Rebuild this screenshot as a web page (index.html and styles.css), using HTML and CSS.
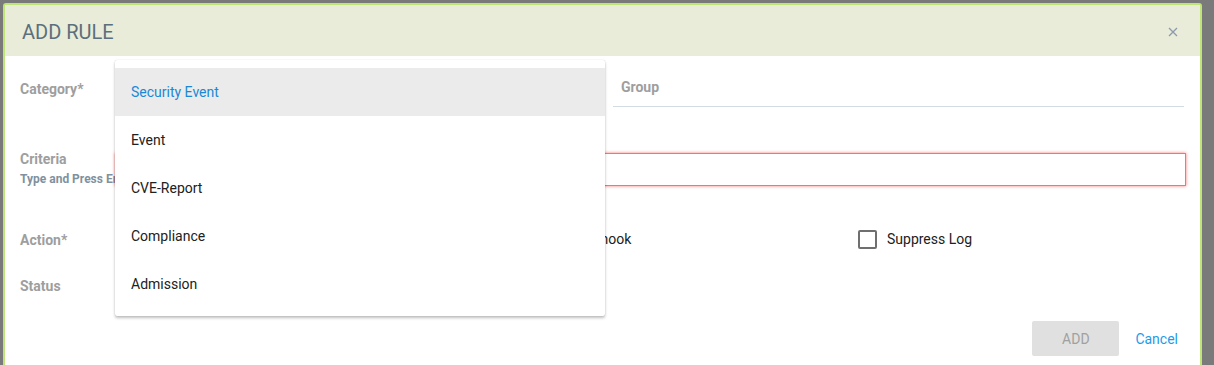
FILE: index.html
```html
<!DOCTYPE html>
<html lang="en">
<head>
    <meta charset="UTF-8">
    <meta name="viewport" content="width=device-width, initial-scale=1.0">
    <title>Add Rule</title>
    <link rel="stylesheet" href="styles.css">
</head>
<body>
    <div class="modal">
        <div class="modal-header">
            <h2>ADD RULE</h2>
            <span class="close">
                <svg width="10" height="10" viewBox="0 0 10 10">
                    <path d="M1 1 L9 9 M9 1 L1 9" stroke="#8c9bab" stroke-width="1.3" fill="none"/>
                </svg>
            </span>
        </div>

        <div class="modal-body">
            <div class="row row-top">
                <label class="label">Category*</label>
                <div class="select"></div>
                <div class="group-field">
                    <span class="group-label">Group</span>
                </div>
            </div>

            <div class="row row-criteria">
                <div class="label-block">
                    <label class="label">Criteria</label>
                    <div class="hint">Type and Press Enter</div>
                </div>
                <div class="criteria-input"></div>
            </div>

            <div class="row row-action">
                <label class="label">Action*</label>
                <div class="options">
                    <div class="option"><span class="checkbox"></span>Deny</div>
                    <div class="option"><span class="checkbox"></span>Webhook</div>
                    <div class="option"><span class="checkbox"></span>Suppress Log</div>
                </div>
            </div>

            <div class="row row-status">
                <label class="label">Status</label>
                <span class="toggle"></span>
            </div>

            <div class="footer">
                <button class="btn-add" disabled>ADD</button>
                <button class="btn-cancel">Cancel</button>
            </div>
        </div>

        <!-- category dropdown, open -->
        <ul class="menu">
            <li class="active">Security Event</li>
            <li>Event</li>
            <li>CVE-Report</li>
            <li>Compliance</li>
            <li>Admission</li>
        </ul>
    </div>
</body>
</html>
```

FILE: styles.css
```css
body {
    margin: 0;
    font-family: Roboto, 'Liberation Sans', sans-serif;
    background-color: #7a7a7a;
    height: 365px;
    overflow: hidden;
}
.modal {
    position: relative;
    margin: 3px 0 0 3px;
    width: 1195px;
    height: 400px;
    background: white;
    border: 2px solid #bfe478;
    border-radius: 3px;
}
.modal-header {
    display: flex;
    align-items: center;
    justify-content: space-between;
    height: 51px;
    padding: 0 22px 0 17px;
    background-color: #e8ecd9;
}
.modal-header h2 {
    margin: 0;
    font-size: 20px;
    font-weight: 400;
    color: #5b6f7d;
    padding-top: 2px;
}
.close {
    display: flex;
    padding-top: 2px;
}
.modal-body {
    padding: 10px 16px 0 15px;
}
.row {
    display: flex;
    align-items: center;
}
.label {
    display: block;
    width: 95px;
    flex-shrink: 0;
    font-size: 14px;
    font-weight: 700;
    color: #9e9e9e;
    line-height: 16px;
}
.row-top {
    height: 44px;
    align-items: flex-start;
}
.row-top .label {
    padding-top: 15px;
}
.select {
    width: 485px;
    height: 44px;
}
.group-field {
    flex: 1;
    margin-left: 13px;
    height: 29px;
    padding: 11px 0 0 8px;
    border-bottom: 1px solid #d2dce2;
}
.group-label {
    font-size: 14px;
    font-weight: 700;
    color: #9e9e9e;
    line-height: 16px;
}
.row-criteria {
    margin-top: 40px;
    align-items: flex-start;
}
.label-block {
    width: 95px;
    flex-shrink: 0;
    padding-top: 1px;
}
.hint {
    margin-top: 5px;
    font-size: 12px;
    font-weight: 700;
    color: #7f919e;
    line-height: 14px;
    white-space: nowrap;
}
.criteria-input {
    flex: 1;
    height: 31px;
    margin: 3px -2px 0 0;
    border: 1px solid #9a9a9a;
    box-shadow: 0 0 3px rgba(255, 60, 60, 0.7);
}
.row-action {
    margin-top: 42px;
    height: 22px;
}
.row-action .label {
    padding-top: 2px;
}
.options {
    display: flex;
    margin-left: 115px;
}
.option {
    display: flex;
    align-items: center;
    width: 314px;
    font-size: 14px;
    color: #212121;
}
.checkbox {
    width: 15px;
    height: 15px;
    border: 2px solid #6f6f6f;
    border-radius: 2px;
    margin-right: 10px;
}
.row-status {
    margin-top: 26px;
    height: 20px;
}
.toggle {
    width: 34px;
    height: 14px;
    border-radius: 7px;
    background: #bdbdbd;
}
.footer {
    display: flex;
    justify-content: flex-end;
    align-items: center;
    gap: 16px;
    margin-top: 25px;
    padding-right: 6px;
}
.btn-add {
    width: 87px;
    height: 35px;
    border: none;
    border-radius: 2px;
    background-color: #e0e0e0;
    color: #a0a0a0;
    font-family: inherit;
    font-size: 14px;
}
.btn-cancel {
    border: none;
    background: none;
    padding: 0;
    color: #1e9be8;
    font-family: inherit;
    font-size: 14px;
}
.menu {
    position: absolute;
    left: 110px;
    top: 55px;
    width: 490px;
    margin: 0;
    padding: 8px 0;
    list-style: none;
    background: white;
    box-shadow: 0 2px 3px rgba(0, 0, 0, 0.25), 0 0 1px rgba(0, 0, 0, 0.2);
    border-radius: 2px;
}
.menu li {
    height: 48px;
    line-height: 48px;
    padding: 0 16px;
    font-size: 14px;
    color: #212121;
}
.menu li.active {
    background-color: #ebebeb;
    color: #1a88d6;
}
```
